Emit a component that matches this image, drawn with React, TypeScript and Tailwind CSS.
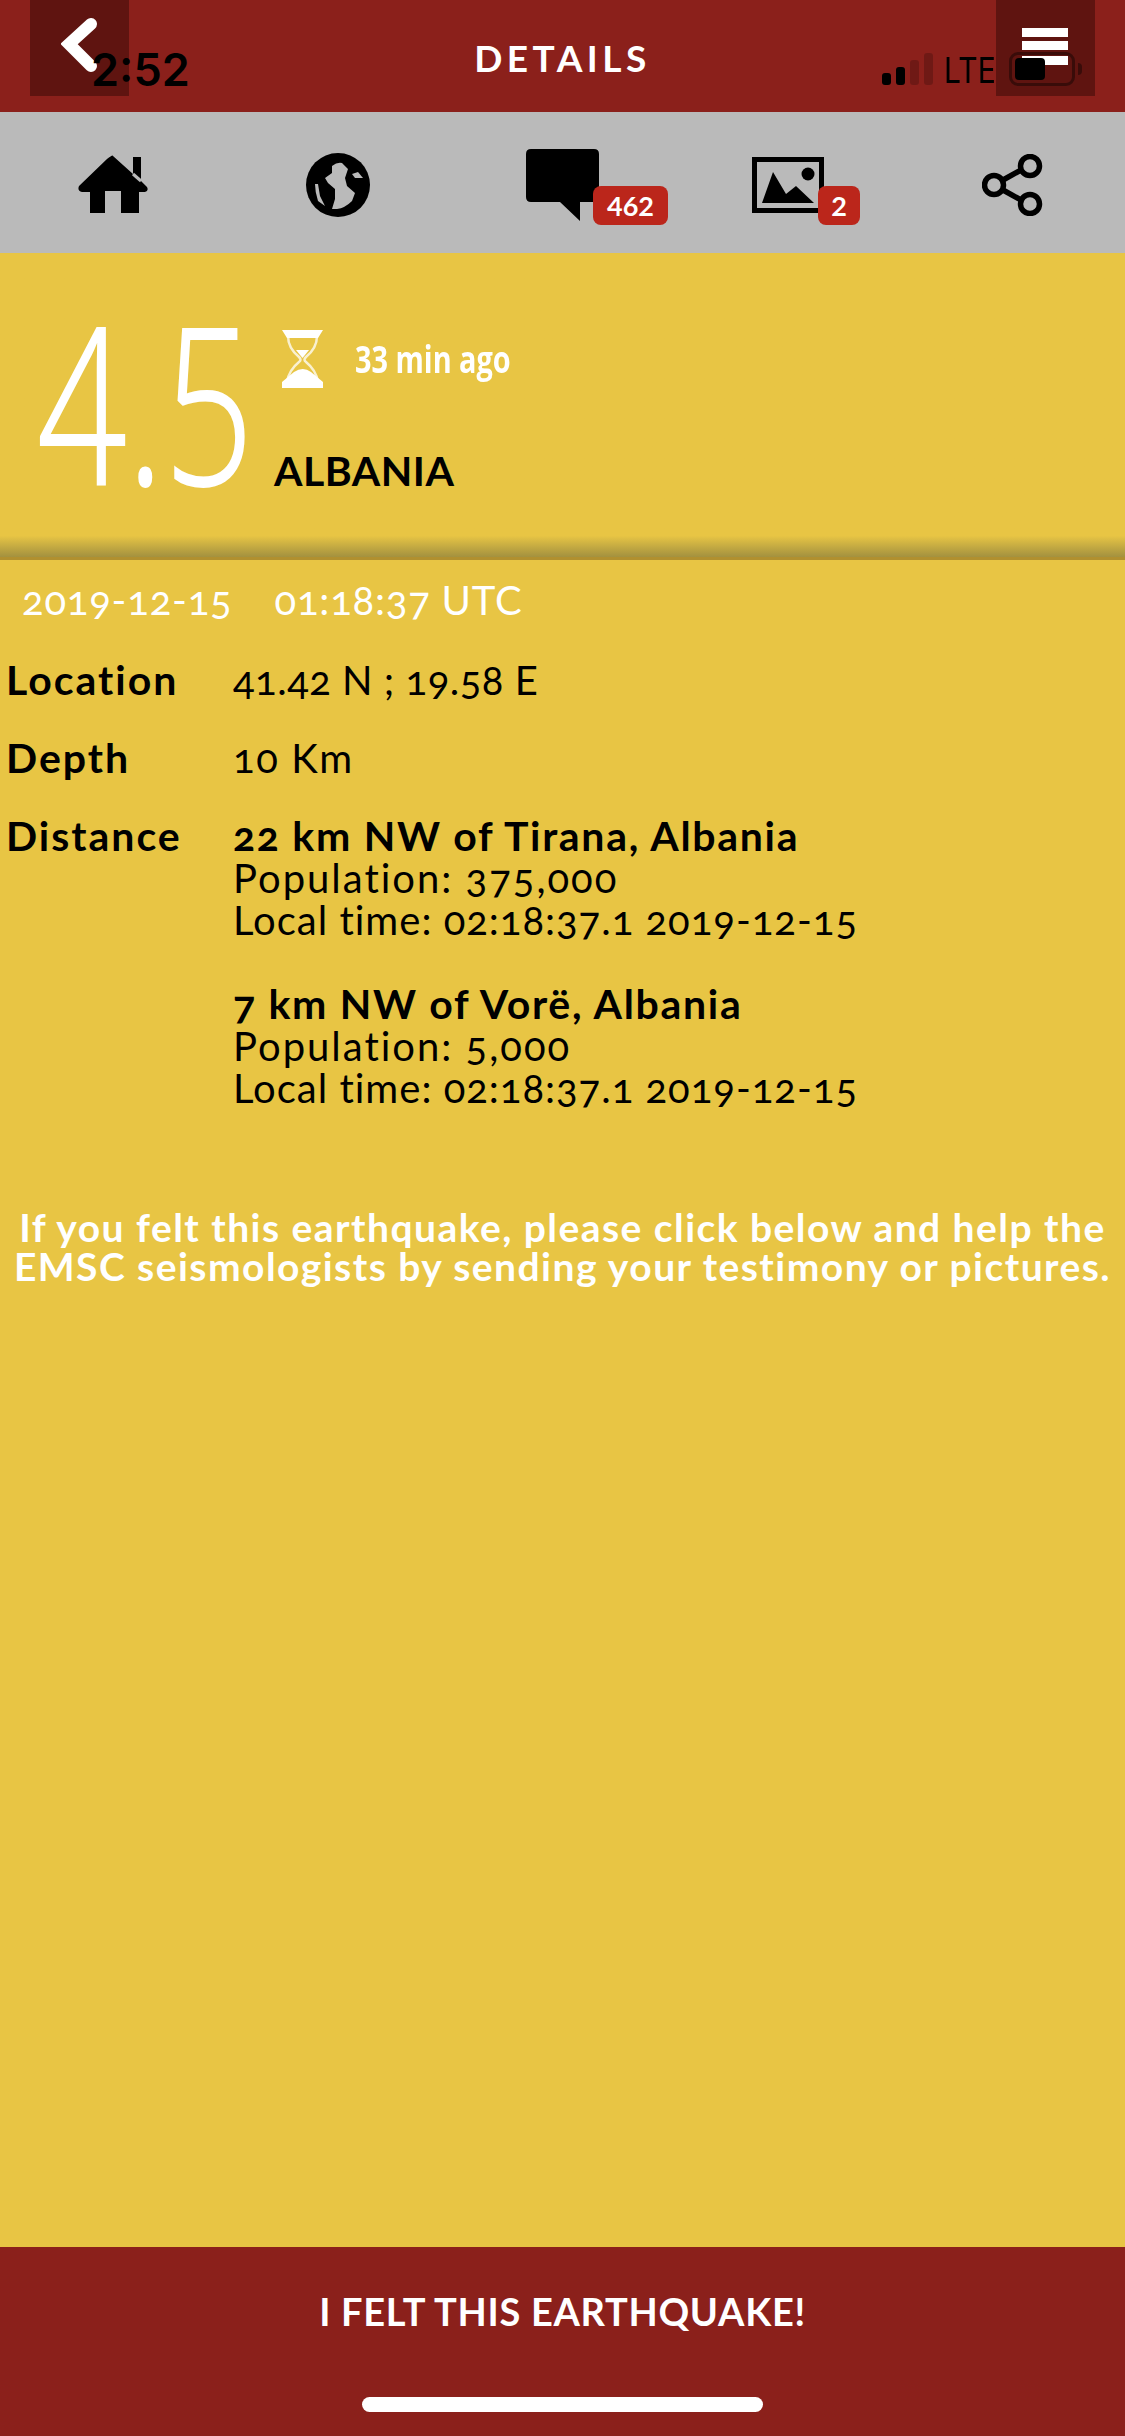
const body = { fontFamily: "Lato, 'Open Sans', sans-serif" };
const condensed = { fontFamily: "'Open Sans', sans-serif" };

function HomeIcon() {
  return (
    <svg width="72" height="60" viewBox="0 0 72 60" fill="#000">
      <path d="M36 1 L 56 19 V 2 H 64 V 26 L 70 32 Q 72 36 68 37 H 62 V 58 H 44 V 36 H 28 V 58 H 13 V 37 H 5 Q 0 36 2 31 L 30 4 Q 36 -1 36 1 Z" />
      <path d="M56 19 L 64 26" stroke="#bababa" strokeWidth="3" />
    </svg>
  );
}

function GlobeIcon() {
  return (
    <svg width="66" height="66" viewBox="0 0 66 66">
      <circle cx="33" cy="33" r="32" fill="#000" />
      <path d="M27 14 Q 32 10 37 11 L 43 17 L 40 26 L 42 34 L 50 41 L 47 49 Q 40 56 32 57 L 27 57 L 30 47 L 30 37 L 23 31 L 20 26 L 27 21 Z" fill="#bababa" />
      <path d="M10 32 L 13 32 L 15 44 L 20 54 L 13 49 Q 10 40 10 32 Z" fill="#bababa" />
      <path d="M47 22 L 53 20 L 58 26 L 50 26 Z" fill="#bababa" />
    </svg>
  );
}

function BubbleIcon() {
  return (
    <svg width="74" height="72" viewBox="0 0 74 72" fill="#000">
      <path d="M5 0 H 68 Q 73 0 73 5 V 48 Q 73 53 68 53 H 54 V 72 L 34 53 H 5 Q 0 53 0 48 V 5 Q 0 0 5 0 Z" />
    </svg>
  );
}

function ImageIcon() {
  return (
    <svg width="72" height="56" viewBox="0 0 72 56">
      <rect x="2.5" y="2.5" width="67" height="51" fill="none" stroke="#000" strokeWidth="5" />
      <circle cx="56" cy="17" r="6.5" fill="#000" />
      <path d="M10 46 L 21 15 L 34 37 L 44 29 L 62 46 Z" fill="#000" />
    </svg>
  );
}

function ShareIcon() {
  return (
    <svg width="62" height="62" viewBox="0 0 62 62" fill="none" stroke="#000" strokeWidth="5.5">
      <circle cx="48" cy="12" r="9.5" />
      <circle cx="12" cy="31" r="9.5" />
      <circle cx="48" cy="50" r="9.5" />
      <path d="M21 26 L 39 16 M 21 36 L 39 46" />
    </svg>
  );
}

function Hourglass() {
  return (
    <svg className="blur-[0.7px]" width="41" height="58" viewBox="0 0 41 58">
      <path d="M0 0 H 41 L 36 8 H 5 Z" fill="#fff" />
      <path d="M0 58 H 41 V 52 L 29 42 Q 21 36 12 42 L 0 52 Z" fill="#fff" />
      <path d="M6 6 Q 6 18 17 27 Q 20 30 17 32 Q 7 40 5 52 M 35 6 Q 35 18 24 27 Q 21 30 24 32 Q 34 40 36 52" fill="none" stroke="#fff" strokeOpacity="0.75" strokeWidth="2.5" />
      <path d="M14 20 H 27 L 20.5 28 Z" fill="#fff" />
    </svg>
  );
}

function StatusBar() {
  return (
    <div className="absolute left-0 top-0 w-full h-[96px] pointer-events-none">
      <span
        className="absolute left-[91px] top-[43px] text-[45px] leading-[54px] font-semibold text-black"
        style={{ fontFamily: "Inter, sans-serif" }}
      >
        2:52
      </span>
      <div className="absolute left-[882px] top-[53px] flex items-end gap-[5px] h-[32px]">
        <div className="w-[9px] h-[12px] rounded-[3px] bg-black" />
        <div className="w-[9px] h-[18px] rounded-[3px] bg-black" />
        <div className="w-[9px] h-[25px] rounded-[3px] bg-black/20" />
        <div className="w-[9px] h-[32px] rounded-[3px] bg-black/20" />
      </div>
      <span
        className="absolute left-[944px] top-[50px] text-[36px] leading-[40px] text-black origin-left scale-x-[0.84]"
        style={{ fontFamily: "Inter, sans-serif" }}
      >
        LTE
      </span>
      <div className="absolute left-[1009px] top-[52px] w-[66px] h-[34px] rounded-[9px] border-[3px] border-black/40 p-[3px]">
        <div className="w-[30px] h-[22px] rounded-[4px] bg-black" />
      </div>
      <div className="absolute left-[1078px] top-[63px] w-[4px] h-[12px] rounded-r-full bg-black/40" />
    </div>
  );
}

function Row({ label, children }: { label: string; children: React.ReactNode }) {
  return (
    <div className="flex">
      <div className="w-[227px] shrink-0 text-[41px] font-bold tracking-[2px]">{label}</div>
      <div>{children}</div>
    </div>
  );
}

function Place({ title, population, time }: { title: string; population: string; time: string }) {
  return (
    <div>
      <div className="text-[41px] font-bold tracking-[1.7px]">{title}</div>
      <div className="tracking-[2px]">Population: {population}</div>
      <div>Local time: {time}</div>
    </div>
  );
}

export default function App() {
  return (
    <div className="relative flex flex-col w-[1125px] h-[2436px] bg-[#e8c544] overflow-hidden" style={body}>
      <header className="flex justify-between h-[112px] px-[30px] bg-[#8b201b] shrink-0">
        <button className="flex w-[99px] h-[96px] pl-[31px] pt-[18px] bg-[#5f1410]">
          <svg className="blur-[0.7px]" width="36" height="54" viewBox="0 0 36 54">
            <path d="M30 6 L 8 26 L 30 48" fill="none" stroke="#fff" strokeWidth="12" strokeLinecap="round" strokeLinejoin="miter" />
          </svg>
        </button>
        <h1 className="pt-[33px] text-[37px] leading-[50px] font-bold tracking-[4.5px] text-white">DETAILS</h1>
        <button className="flex flex-col gap-[4px] w-[99px] h-[96px] pl-[26px] pt-[28px] bg-[#5f1410]">
          <div className="w-[46px] h-[9px] bg-white blur-[0.7px]" />
          <div className="w-[46px] h-[9px] bg-white blur-[0.7px]" />
          <div className="w-[46px] h-[9px] mt-[2px] bg-white blur-[0.7px]" />
        </button>
      </header>

      <nav className="grid grid-cols-5 items-center h-[141px] pt-[5px] bg-[#bababa] shrink-0">
        <div className="flex justify-center"><HomeIcon /></div>
        <div className="flex justify-center"><GlobeIcon /></div>
        <div className="relative flex justify-center">
          <BubbleIcon />
          <span className="absolute left-[143px] top-[37px] w-[75px] h-[39px] rounded-[8px] bg-[#bb261b] text-center text-[27px] leading-[39px] font-bold text-white">462</span>
        </div>
        <div className="relative flex justify-center">
          <ImageIcon />
          <span className="absolute left-[143px] top-[29px] w-[42px] h-[39px] rounded-[8px] bg-[#bb261b] text-center text-[27px] leading-[39px] font-bold text-white">2</span>
        </div>
        <div className="flex justify-center"><ShareIcon /></div>
      </nav>

      <section className="flex h-[307px] pl-[37px] shrink-0 bg-gradient-to-b from-[#e8c544] from-[93%] to-[#a3913f] border-b-[3px] border-[#b1902f]">
        <div
          className="w-[237px] pt-[28px] text-[218px] leading-[240px] font-light text-white origin-left scale-x-[0.72] whitespace-nowrap [-webkit-text-stroke:2px_white]"
          style={condensed}
        >
          4.5
        </div>
        <div className="flex flex-col pt-[77px]">
          <div className="flex items-center gap-[32px] pl-[8px]">
            <Hourglass />
            <span className="text-[37px] leading-[40px] font-bold text-white origin-left scale-x-[0.78] whitespace-nowrap" style={condensed}>33 min ago</span>
          </div>
          <div className="mt-[59px] text-[41px] leading-[48px] font-bold tracking-[0.5px] text-black">ALBANIA</div>
        </div>
      </section>

      <div className="flex gap-[42px] pl-[22px] pt-[16px] text-[40px] leading-[48px] tracking-[0.8px] text-white [font-variant-numeric:oldstyle-nums]">
        <span>2019-12-15</span>
        <span>01:18:37 UTC</span>
      </div>

      <div className="flex flex-col gap-[36px] mt-[35px] pl-[6px] text-[40px] leading-[42px] tracking-[1px] text-black [font-variant-numeric:oldstyle-nums]">
        <Row label="Location"><span className="tracking-[0.5px]">41.42 N ; 19.58 E</span></Row>
        <Row label="Depth"><span className="tracking-[1.6px]">10 Km</span></Row>
        <Row label="Distance">
          <div className="flex flex-col gap-[42px]">
            <Place title="22 km NW of Tirana, Albania" population="375,000" time="02:18:37.1 2019-12-15" />
            <Place title="7 km NW of Vorë, Albania" population="5,000" time="02:18:37.1 2019-12-15" />
          </div>
        </Row>
      </div>

      <p className="mt-[99px] text-center text-[39px] leading-[39px] font-bold tracking-[1.45px] text-white">
        If you felt this earthquake, please click below and help the
        <br />
        EMSC seismologists by sending your testimony or pictures.
      </p>

      <footer className="mt-auto flex flex-col items-center h-[189px] bg-[#8b201b] shrink-0">
        <button className="mt-[40px] text-[38px] leading-[48px] font-bold tracking-[0.7px] text-white">I FELT THIS EARTHQUAKE!</button>
        <div className="mt-[62px] w-[401px] h-[15px] rounded-full bg-white" />
      </footer>

      <StatusBar />
    </div>
  );
}
